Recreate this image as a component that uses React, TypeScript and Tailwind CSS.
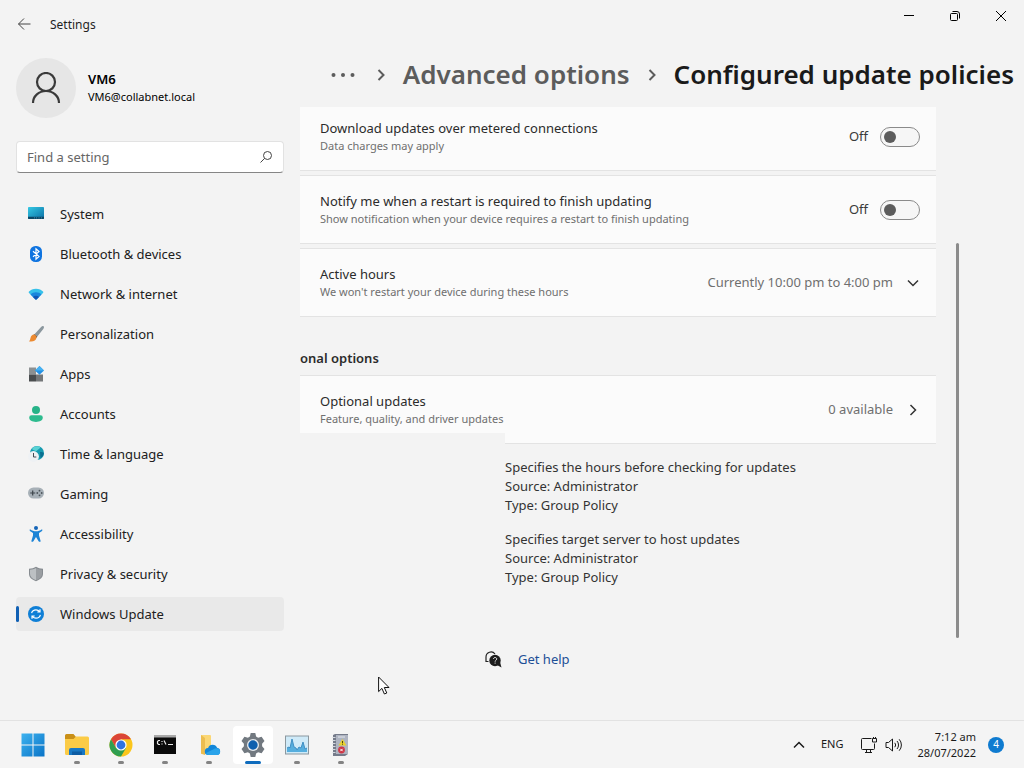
import type { ReactNode } from 'react';

interface NavItem {
  label: string;
  icon: ReactNode;
  active?: boolean;
}

interface SettingCardProps {
  title: string;
  description: string;
  children: ReactNode;
}

const NAV_ITEMS: NavItem[] = [
  {
    label: 'System',
    icon: (
      <svg viewBox="0 0 16 16" className="size-4">
        <defs>
          <linearGradient id="sys" x1="0" y1="0" x2="1" y2="1">
            <stop offset="0" stopColor="#35c9e4" />
            <stop offset="1" stopColor="#0a6fa5" />
          </linearGradient>
        </defs>
        <rect x="0" y="1" width="16" height="12" rx="0.8" fill="url(#sys)" />
        <path d="M0 10.700h16v1.500a.8.8 0 0 1-.8.8H.8a.8.8 0 0 1-.8-.8z" fill="#0b4665" />
        <path d="M6 11.900h1M8 11.900h1M10.500 11.900h1M13 11.900h1" stroke="#4f9ec0" strokeWidth="0.8" />
      </svg>
    ),
  },
  {
    label: 'Bluetooth & devices',
    icon: (
      <svg viewBox="0 0 16 16" className="size-4">
        <rect x="2" y="0" width="12" height="16" rx="5.500" fill="#0f74e0" />
        <path d="M5 5.200l6 5.300-3 2.700V2.800l3 2.700-6 5.300" fill="none" stroke="#fff" strokeWidth="1.200" />
      </svg>
    ),
  },
  {
    label: 'Network & internet',
    icon: (
      <svg viewBox="0 0 16 16" className="size-4">
        <path d="M1 5.600C2.500 3.800 5 2.700 8 2.700s5.500 1.100 7 2.900c.5.600.4 1 0 1.400L8.700 13.300a1 1 0 0 1-1.400 0L1 7c-.4-.4-.5-.8 0-1.400z" fill="#36c1ea" />
        <path d="M2.500 8.500C4 7 5.800 6.200 8 6.200s4 .8 5.500 2.300l-4.800 4.800a1 1 0 0 1-1.400 0z" fill="#1a86dc" />
        <path d="M5 11c.8-.8 1.800-1.200 3-1.200s2.200.4 3 1.200l-2.300 2.300a1 1 0 0 1-1.400 0z" fill="#1255b4" />
      </svg>
    ),
  },
  {
    label: 'Personalization',
    icon: (
      <svg viewBox="0 0 16 16" className="size-4">
        <path d="M15.700.4c.6.600.2 1.600-.4 2.500l-6 7.600-2.600-2.600L13.100.9c.9-.8 2-1.100 2.600-.5z" fill="#8b979e" />
        <path d="M6.700 7.900l2.600 2.600-1.100 1.400-2.800-2.800z" fill="#6a5548" />
        <path d="M6 8.500c1.500.2 2.600 1.500 2.500 3C8.300 15 4.500 16.200.8 15.300c1.300-.9 1.300-2 1.700-3.400C3 10 4.200 8.500 6 8.500z" fill="#ec8a31" />
      </svg>
    ),
  },
  {
    label: 'Apps',
    icon: (
      <svg viewBox="0 0 16 16" className="size-4">
        <rect x="1" y="1.500" width="7" height="7" fill="#8c9092" />
        <rect x="1" y="8.500" width="7" height="7" fill="#4a4d4f" />
        <rect x="8" y="8.500" width="7" height="7" fill="#747779" />
        <path d="M11.500 0l4.500 4.400-4.500 4.400L7 4.400z" fill="#2390e4" />
        <path d="M11.500 0l4.500 4.400h-9z" fill="#46b1f2" />
      </svg>
    ),
  },
  {
    label: 'Accounts',
    icon: (
      <svg viewBox="0 0 16 16" className="size-4">
        <circle cx="8" cy="4" r="4" fill="#27b388" />
        <path d="M3.500 9.300h9A2.300 2.300 0 0 1 14.800 11.600C14.800 14.500 11.800 16 8 16s-6.800-1.500-6.800-4.400a2.300 2.300 0 0 1 2.300-2.300z" fill="#2dbb8e" />
      </svg>
    ),
  },
  {
    label: 'Time & language',
    icon: (
      <svg viewBox="0 0 16 16" className="size-4">
        <circle cx="9" cy="7" r="7" fill="#179bb0" />
        <path d="M5 1.500C8-.2 11 0 12 1c.6 1.500-2 2-3 3.500S5 4 4 3z" fill="#5ad2d4" />
        <path d="M12 6c2 0 3.500 0 3.800 1.500-.2 2-1.800 4-3.300 4.500z" fill="#0b6f90" />
        <circle cx="5.500" cy="10.500" r="5.400" fill="#eef1f4" />
        <path d="M5.500 7v4h2.800" fill="none" stroke="#424952" strokeWidth="1" />
      </svg>
    ),
  },
  {
    label: 'Gaming',
    icon: (
      <svg viewBox="0 0 16 16" className="size-4">
        <rect x="0" y="1.500" width="16" height="11" rx="5.500" fill="#a7b0b7" />
        <path d="M4.700 4.500v5M2.200 7h5" stroke="#3c444a" strokeWidth="1.200" />
        <circle cx="11.500" cy="4.700" r="0.900" fill="#4d555b" />
        <circle cx="11.500" cy="9.300" r="0.900" fill="#4d555b" />
        <circle cx="9.300" cy="7" r="0.900" fill="#4d555b" />
        <circle cx="13.700" cy="7" r="0.900" fill="#4d555b" />
      </svg>
    ),
  },
  {
    label: 'Accessibility',
    icon: (
      <svg viewBox="0 0 16 16" className="size-4">
        <circle cx="8" cy="2" r="2" fill="#1565b8" />
        <path d="M2 3.300c2 1.600 4 2 6 2s4-.4 6-2c.7 1 .3 1.500-.3 1.900L11 7v2.500l1.700 5.700c-.6.900-1.700.8-2.100 0L8 11l-2.600 4.200c-.4.800-1.500.9-2.100 0L5 9.500V7L2.300 5.200C1.700 4.800 1.300 4.300 2 3.300z" fill="#1c84d6" />
      </svg>
    ),
  },
  {
    label: 'Privacy & security',
    icon: (
      <svg viewBox="0 0 16 16" className="size-4">
        <path d="M8 .8c2 1.300 4.200 2 7 2v5c0 3.500-2.600 5.700-7 7.400-4.400-1.700-7-3.900-7-7.400v-5c2.800 0 5-.7 7-2z" fill="#868b90" />
        <path d="M8 2C6.200 3 4.300 3.600 2 3.700v4c0 3 2 5 6 6.500z" fill="#bcc0c3" />
        <path d="M8 2c1.800 1 3.700 1.600 6 1.700v4c0 3-2 5-6 6.500z" fill="#9a9ea2" />
      </svg>
    ),
  },
  {
    label: 'Windows Update',
    active: true,
    icon: (
      <svg viewBox="0 0 16 16" className="size-4">
        <circle cx="8" cy="8" r="8" fill="#0f7fd6" />
        <path d="M3.600 7.200C4.200 5 6 3.900 8 3.900c1.500 0 2.700.6 3.700 1.700M12 3.300v2.700H9.300M12.400 8.800c-.6 2.200-2.400 3.300-4.400 3.300-1.500 0-2.700-.6-3.700-1.700M4 12.700V10h2.700" fill="none" stroke="#fff" strokeWidth="1.200" />
      </svg>
    ),
  },
];

const POLICIES = [
  'Specifies the hours before checking for updates',
  'Specifies target server to host updates',
];

const TASKBAR_APPS: NavItem[] = [
  {
    label: 'File Explorer',
    icon: (
      <svg viewBox="0 0 24 24" className="size-6">
        <path d="M0 2.500A1.500 1.500 0 0 1 1.500 1h7L11 4v4H0z" fill="#c98f17" />
        <path d="M0 6h8.500L11 3.500h11.500A1.500 1.500 0 0 1 24 5v15.500a1.500 1.500 0 0 1-1.500 1.500h-21A1.500 1.500 0 0 1 0 20.500z" fill="#fbcb46" />
        <path d="M4 22v-5a2 2 0 0 1 2-2h12a2 2 0 0 1 2 2v5z" fill="#1878c4" />
        <path d="M7 18.500h10V22H7z" fill="#0d5ca3" />
      </svg>
    ),
  },
  {
    label: 'Google Chrome',
    icon: (
      <svg viewBox="0 0 24 24" className="size-6">
        <circle cx="12" cy="12" r="11.500" fill="#fbc61c" />
        <path d="M2.040 6.250A11.500 11.500 0 0 1 21.960 6.250H12L7 14.900z" fill="#db4537" />
        <path d="M2.040 6.250A11.500 11.500 0 0 0 12 23.500L17 14.900H7z" fill="#2f9e50" />
        <circle cx="12" cy="12" r="5.600" fill="#fff" />
        <circle cx="12" cy="12" r="4.400" fill="#2f73e0" />
      </svg>
    ),
  },
  {
    label: 'Command Prompt',
    icon: (
      <svg viewBox="0 0 24 24" className="size-6">
        <rect x="1" y="2" width="22" height="19" fill="#0a0a0a" />
        <rect x="1" y="2" width="22" height="2.500" fill="#a9a9a9" />
        <path d="M7 7.500H5.500L4.500 8.500v2l1 1H7M9 8v1M9 10.500v1M11 7.500l2 4M15 11.500h5" fill="none" stroke="#e8e8e8" strokeWidth="1.200" />
      </svg>
    ),
  },
  {
    label: 'OneDrive folder',
    icon: (
      <svg viewBox="0 0 24 24" className="size-6">
        <path d="M4 2h9a1 1 0 0 1 1 1v18H5a1 1 0 0 1-1-1z" fill="#fbd775" />
        <path d="M4 2l4 3v17l-3-1a1 1 0 0 1-1-1z" fill="#ecbd4f" />
        <path d="M11.500 22a3.500 3.500 0 0 1-.4-7 4.800 4.800 0 0 1 9-.2A3.700 3.700 0 0 1 20.500 22z" fill="#1286d8" />
        <path d="M9 20l9-4.500c3-1 4.500.5 5 2.500.3 2-1 4-2.500 4h-9C10 22 9.400 21 9 20z" fill="#29a3ea" />
      </svg>
    ),
  },
  {
    label: 'Settings',
    active: true,
    icon: (
      <svg viewBox="0 0 24 24" className="size-6">
        <path d="M9.700 0h4.600l.8 3.500 2 1.200L20.600 3.700l2.900 4.200-2.400 2.800v2.600l2.400 2.800-2.900 4.200-3.500-1-2 1.200-.8 3.500H9.700l-.8-3.500-2-1.200-3.500 1L.5 16.100l2.400-2.800v-2.600L.5 7.900l2.900-4.200 3.500 1 2-1.200z" fill="#727980" />
        <circle cx="12" cy="12" r="6" fill="#e6eaee" />
        <circle cx="12" cy="12" r="4.700" fill="#0f60ae" />
      </svg>
    ),
  },
  {
    label: 'Performance Monitor',
    icon: (
      <svg viewBox="0 0 24 24" className="size-6">
        <rect x="0.500" y="3" width="23" height="18" fill="#cfeaf8" stroke="#8b989f" />
        <path d="M2 19v-4l2-1 1 1 2-9 2 8 2 1 1 2 2-3 2 1 2-6 2 7 2-1v4z" fill="#55aede" />
        <path d="M2 15l2-1 1 1 2-9 2 8 2 1 1 2 2-3 2 1 2-6 2 7 2-1" fill="none" stroke="#3f8fc4" />
      </svg>
    ),
  },
  {
    label: 'Event log',
    icon: (
      <svg viewBox="0 0 24 24" className="size-6">
        <path d="M4 2l2-1h13v20l-3 2H4z" fill="#757b8a" />
        <path d="M7 2h12v19H7z" fill="#aeb4c1" />
        <path d="M3.500 4.500h3M3.500 7.500h3M3.500 10.500h3M3.500 13.500h3M3.500 16.500h3M3.500 19.500h3" stroke="#d5d9e0" />
        <path d="M9 4h7" stroke="#e4e7ed" />
        <path d="M13.500 6l4 6.500h-8z" fill="#ead12b" />
        <path d="M13.500 8v2.200M13.500 10.800v.9" stroke="#4c4612" />
        <circle cx="12.500" cy="17" r="3.400" fill="#cf3545" />
        <path d="M11.300 15.800l2.400 2.400M13.700 15.800l-2.400 2.400" stroke="#fff" />
      </svg>
    ),
  },
];

function Chevron({ className }: { className: string }) {
  return (
    <svg viewBox="0 0 12 12" className={className} fill="none" stroke="currentColor">
      <path d="M3.500 1l5 5-5 5" />
    </svg>
  );
}

function SettingCard({ title, description, children }: SettingCardProps) {
  return (
    <div className="flex h-[69px] items-center justify-between border-y border-[#e3e3e3] bg-[#fbfbfb] pr-4 pl-5">
      <div className="pt-px">
        <h3 className="text-[13px] leading-[18px] text-[#2b2b2b]">{title}</h3>
        <p className="text-[11px] leading-[18px] text-[#6f6f6f]">{description}</p>
      </div>
      <div className="flex items-center text-[13px] text-[#6f6f6f]">{children}</div>
    </div>
  );
}

function Toggle({ id, label }: { id: string; label: string }) {
  return (
    <>
      <label htmlFor={id} className="mr-3 pt-px text-[#3a3a3a]">
        Off
      </label>
      <input
        id={id}
        type="checkbox"
        role="switch"
        aria-label={label}
        className="flex h-5 w-10 appearance-none items-center rounded-full border border-[#8a8a8a] bg-[#f6f6f6] px-[3px] before:size-3 before:rounded-full before:bg-[#5c5c5c]"
      />
    </>
  );
}

function Sidebar() {
  return (
    <aside className="w-[300px] shrink-0 px-4">
      <div className="flex h-12 items-center gap-[17px] pl-px">
        <button aria-label="Back" className="text-[#444]">
          <svg viewBox="0 0 16 16" className="size-4" fill="none" stroke="currentColor">
            <path d="M13.500 8H1.500M7 2.500L1.500 8 7 13.500" />
          </svg>
        </button>
        <span className="pt-px text-[12px] text-[#1f1f1f]">Settings</span>
      </div>

      {/* Signed-in user */}
      <div className="mt-[10px] flex items-center gap-3">
        <div className="flex size-[60px] items-center justify-center rounded-full bg-[#e6e6e6]">
          <svg viewBox="0 0 30 32" className="h-8 w-[30px]" fill="none" stroke="#3a3a3a" strokeWidth="2.200">
            <circle cx="15" cy="10" r="9" />
            <path d="M2 31c0-7 6-12 13-12s13 5 13 12" />
          </svg>
        </div>
        <div className="text-black">
          <div className="text-[13px] leading-[18px] font-semibold">VM6</div>
          <div className="text-[11px] leading-[18px]">VM6@collabnet.local</div>
        </div>
      </div>

      <div className="mt-[23px] flex h-8 items-center rounded border border-[#e2e2e2] border-b-[#858585] bg-white px-[10px]">
        <input
          type="text"
          aria-label="Find a setting"
          placeholder="Find a setting"
          className="min-w-0 flex-1 bg-transparent pt-px text-[13px] outline-none placeholder:text-[#666]"
        />
        <svg viewBox="0 0 14 14" className="size-[14px]" fill="none" stroke="#444">
          <circle cx="8.500" cy="5.500" r="4" />
          <path d="M5.600 8.400L1.500 12.500" />
        </svg>
      </div>

      <nav className="mt-6 flex flex-col gap-[6px]">
        {NAV_ITEMS.map((item) => (
          <a
            key={item.label}
            href="#"
            className={
              item.active
                ? 'flex h-[34px] items-center rounded bg-[#e9e9e9]'
                : 'flex h-[34px] items-center rounded'
            }
          >
            <span className={item.active ? 'mr-[9px] h-4 w-[3px] rounded-full bg-[#1060b4]' : 'mr-[9px] w-[3px]'} />
            {item.icon}
            <span className="ml-4 pt-px text-[13px] text-[#202020]">{item.label}</span>
          </a>
        ))}
      </nav>
    </aside>
  );
}

function TitleControls() {
  return (
    <div className="flex h-8 justify-end text-black">
      <button aria-label="Minimize" className="flex w-[46px] items-center justify-center">
        <svg viewBox="0 0 10 10" className="size-[10px]" fill="none" stroke="currentColor">
          <path d="M0 4.500h10" />
        </svg>
      </button>
      <button aria-label="Restore" className="flex w-[46px] items-center justify-center">
        <svg viewBox="0 0 10 10" className="size-[10px]" fill="none" stroke="currentColor">
          <rect x="0.500" y="2.500" width="7" height="7" rx="1" />
          <path d="M2.500.500H7A2.500 2.500 0 0 1 9.500 3v4.500" />
        </svg>
      </button>
      <button aria-label="Close" className="flex w-[46px] items-center justify-center">
        <svg viewBox="0 0 10 10" className="size-[10px]" fill="none" stroke="currentColor">
          <path d="M0 0l10 10M10 0L0 10" />
        </svg>
      </button>
    </div>
  );
}

function Breadcrumb() {
  return (
    <div className="flex h-[75px] items-center justify-end pt-[10px] pr-[10px] text-[26px] font-semibold whitespace-nowrap">
      <button aria-label="More" className="mr-5">
        <svg viewBox="0 0 24 6" className="h-[6px] w-6" fill="#5c5c5c">
          <circle cx="2.500" cy="3" r="2" />
          <circle cx="12" cy="3" r="2" />
          <circle cx="21.500" cy="3" r="2" />
        </svg>
      </button>
      <Chevron className="mr-4 size-3 stroke-2 text-[#5c5c5c]" />
      <a href="#" className="text-[#5c5c5c]">
        Advanced options
      </a>
      <Chevron className="mx-4 size-3 stroke-2 text-[#5c5c5c]" />
      <h1 className="text-[#1a1a1a]">Configured update policies</h1>
    </div>
  );
}

function UpdatePolicies() {
  return (
    <div className="flex flex-1 overflow-hidden">
      <div className="min-w-0 flex-1">
        <div className="-mt-[5px] flex flex-col gap-1">
          <SettingCard title="Download updates over metered connections" description="Data charges may apply">
            <Toggle id="metered" label="Download updates over metered connections" />
          </SettingCard>
          <SettingCard
            title="Notify me when a restart is required to finish updating"
            description="Show notification when your device requires a restart to finish updating"
          >
            <Toggle id="notify" label="Notify me when a restart is required to finish updating" />
          </SettingCard>
          <SettingCard title="Active hours" description="We won't restart your device during these hours">
            <span>Currently 10:00 pm to 4:00 pm</span>
            <button aria-label="Expand active hours" className="mr-px ml-[14px] text-[#333]">
              <Chevron className="size-3 rotate-90 stroke-[1.5]" />
            </button>
          </SettingCard>
        </div>

        <h2 className="mt-[31px] mb-[7px] text-[13px] leading-5 font-semibold text-[#2b2b2b]">onal options</h2>

        <div className="relative">
          <SettingCard title="Optional updates" description="Feature, quality, and driver updates">
            <span>0 available</span>
            <button aria-label="Open optional updates" className="mr-px ml-[14px] text-[#333]">
              <Chevron className="size-3 stroke-[1.5]" />
            </button>
          </SettingCard>
          <div className="absolute bottom-0 left-0 h-[11px] w-[205px] bg-[#f3f3f3]" />
        </div>

        <div className="mt-[14px] ml-[205px] flex flex-col gap-[15px]">
          {POLICIES.map((policy) => (
            <div key={policy} className="text-[13px] leading-[19px] text-[#333]">
              <p>{policy}</p>
              <p>Source: Administrator</p>
              <p>Type: Group Policy</p>
            </div>
          ))}
        </div>

        <div className="mt-[63px] ml-[185px] flex items-center gap-4">
          <svg viewBox="0 0 17 17" className="size-[17px]">
            <path d="M1 11V6a5 5 0 0 1 9-3M1 10.500h2.500" fill="none" stroke="#222" strokeWidth="1.200" />
            <circle cx="10" cy="9.500" r="5.700" fill="#1c1c1c" />
            <path d="M12 14l4.500 2.500L15 11z" fill="#1c1c1c" />
            <path d="M8.500 8c0-2 3.200-2 3.200 0 0 1.300-1.600 1.300-1.600 2.600M10.100 11.600v1" fill="none" stroke="#f3f3f3" />
          </svg>
          <a href="#" className="text-[13px] leading-[18px] text-[#1d4f96]">
            Get help
          </a>
        </div>
      </div>

      {/* Scroll thumb */}
      <div className="flex w-[88px] shrink-0 flex-col pt-[136px] pb-[82px] pl-5">
        <div className="w-[3px] flex-1 rounded-full bg-[#8b8b8b]" />
      </div>
    </div>
  );
}

function Taskbar() {
  return (
    <footer className="flex h-12 items-center justify-between border-t border-[#e2e2e2] bg-[#f4f4f4] pr-5 pl-[13px]">
      <div className="flex gap-1">
        <button aria-label="Start" className="flex h-[38px] w-10 items-center justify-center">
          <svg viewBox="0 0 24 24" className="size-6">
            <defs>
              <linearGradient id="start" gradientUnits="userSpaceOnUse" x1="0" y1="0" x2="24" y2="24">
                <stop offset="0" stopColor="#3fb4f0" />
                <stop offset="1" stopColor="#0872c6" />
              </linearGradient>
            </defs>
            <path d="M.5.500h11v11H.5zM12.500.500h11v11h-11zM.5 12.500h11v11H.5zM12.500 12.500h11v11h-11z" fill="url(#start)" />
          </svg>
        </button>
        {TASKBAR_APPS.map((app) => (
          <button
            key={app.label}
            aria-label={app.label}
            className={
              app.active
                ? 'flex h-[38px] w-10 flex-col items-center justify-end rounded bg-white'
                : 'flex h-[38px] w-10 flex-col items-center justify-end rounded'
            }
          >
            {app.icon}
            <span
              className={
                app.active
                  ? 'mt-1 h-[3px] w-4 rounded-full bg-[#0f6cbd]'
                  : 'mt-1 h-[3px] w-[6px] rounded-full bg-[#838383]'
              }
            />
          </button>
        ))}
      </div>

      <div className="flex items-center text-[11px] text-[#1a1a1a]">
        <button aria-label="Show hidden icons">
          <Chevron className="size-3 -rotate-90 stroke-[1.5]" />
        </button>
        <span className="ml-4">ENG</span>
        <svg viewBox="0 0 16 16" className="ml-[18px] size-4" fill="none" stroke="currentColor">
          <path d="M10.500 1.500h-9a1 1 0 0 0-1 1v9a1 1 0 0 0 1 1h11a1 1 0 0 0 1-1V6.500M4 15.500h7M5.500 12.500v3M9.500 12.500v3" />
          <path d="M11.500 1.500h4v3.500h-4zM12.500 0v1.500M14.500 0v1.500" />
        </svg>
        <svg viewBox="0 0 18 16" className="ml-2 h-4 w-[18px]" fill="none" stroke="currentColor">
          <path d="M1 5.500h2.500L7.500 2v12l-4-3.500H1z" />
          <path d="M9.800 5.800a3.500 3.500 0 0 1 0 4.400M12 4a6 6 0 0 1 0 8M14.200 2.300a8.500 8.500 0 0 1 0 11.400" />
        </svg>
        <div className="ml-[14px] text-right leading-4">
          <div>7:12 am</div>
          <div>28/07/2022</div>
        </div>
        <span className="ml-3 flex size-4 items-center justify-center rounded-full bg-[#0f7bd0] text-[10px] text-white">
          4
        </span>
      </div>
    </footer>
  );
}

export default function App() {
  return (
    <div className="relative flex min-h-screen flex-col bg-[#f3f3f3] font-['Noto_Sans',sans-serif]">
      <div className="flex flex-1">
        <Sidebar />
        <main className="flex min-w-0 flex-1 flex-col">
          <TitleControls />
          <Breadcrumb />
          <UpdatePolicies />
        </main>
      </div>
      <Taskbar />

      {/* Mouse pointer */}
      <svg viewBox="0 0 12 19" className="pointer-events-none absolute top-[676px] left-[378px] h-[19px] w-3">
        <path d="M.6 1v14.600l3.300-3.200 2.500 5.600 2.400-1-2.500-5.500h4.700z" fill="#fff" stroke="#111" />
      </svg>
    </div>
  );
}
